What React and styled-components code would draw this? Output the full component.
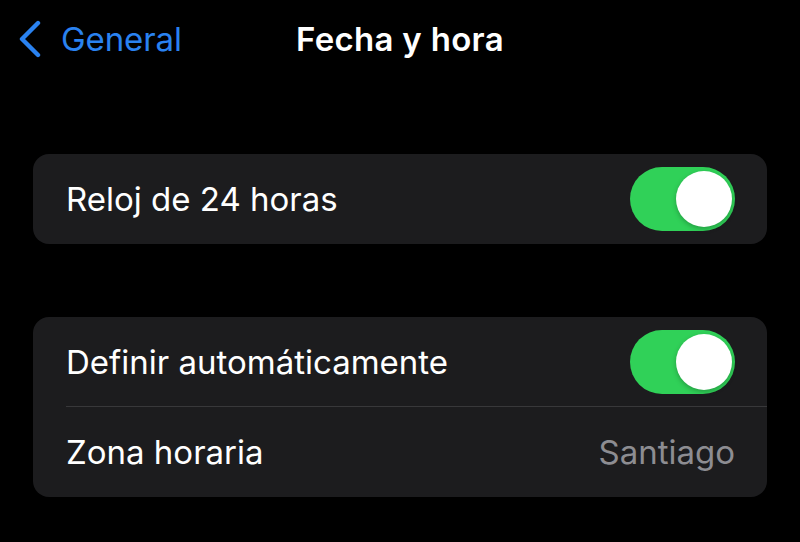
import React, { useState } from 'react'
import styled, { createGlobalStyle } from 'styled-components'

const GlobalStyle = createGlobalStyle`
  html, body {
    margin: 0;
    padding: 0;
    background: #000;
  }
  body {
    font-family: Inter, "Noto Sans", "Liberation Sans", sans-serif;
    color: #fff;
    -webkit-font-smoothing: antialiased;
  }
`

export default function App() {
  const [clock24, setClock24] = useState(true)
  const [autoSet, setAutoSet] = useState(true)

  return (
    <>
      <GlobalStyle />
      <Screen>
        <NavBar>
          <BackButton>
            <svg width="28" height="38" viewBox="0 0 28 38" fill="none">
              <path
                d="M22 3 L6 19 L22 35"
                stroke="currentColor"
                strokeWidth="4.4"
                strokeLinecap="round"
                strokeLinejoin="round"
              />
            </svg>
            <BackLabel>General</BackLabel>
          </BackButton>
          <NavTitle>Fecha y hora</NavTitle>
          <span />
        </NavBar>

        <Content>
          <Group>
            <Row>
              <RowLabel>Reloj de 24 horas</RowLabel>
              <Toggle on={clock24} onClick={() => setClock24(!clock24)}>
                <Knob on={clock24} />
              </Toggle>
            </Row>
          </Group>

          <Group>
            <Row divider>
              <RowLabel>Definir automáticamente</RowLabel>
              <Toggle on={autoSet} onClick={() => setAutoSet(!autoSet)}>
                <Knob on={autoSet} />
              </Toggle>
            </Row>
            <Row>
              <RowLabel>Zona horaria</RowLabel>
              <RowValue>Santiago</RowValue>
            </Row>
          </Group>
        </Content>
      </Screen>
    </>
  )
}

const Screen = styled.div`
  width: 800px;
  height: 542px;
  background: #000;
  overflow: hidden;
`

const NavBar = styled.div`
  display: grid;
  grid-template-columns: 1fr auto 1fr;
  align-items: center;
  height: 78px;
`

const BackButton = styled.div`
  display: flex;
  align-items: center;
  gap: 17px;
  margin-left: 16px;
  color: #2a82f0;
  cursor: pointer;
`

const BackLabel = styled.span`
  font-size: 33px;
  font-weight: 400;
  letter-spacing: -0.1px;
`

const NavTitle = styled.div`
  font-size: 33px;
  font-weight: 600;
  letter-spacing: 0.3px;
  color: #fff;
`

const Content = styled.div`
  display: flex;
  flex-direction: column;
  gap: 73px;
  padding: 76px 33px 0;
`

const Group = styled.div`
  background: #1c1c1e;
  border-radius: 16px;
  overflow: hidden;
`

const Row = styled.div`
  position: relative;
  display: flex;
  align-items: center;
  justify-content: space-between;
  height: 90px;
  padding: 0 32px 0 33px;
  box-sizing: border-box;

  &::after {
    content: '';
    display: ${p => (p.divider ? 'block' : 'none')};
    position: absolute;
    left: 33px;
    right: 0;
    bottom: 0;
    height: 1px;
    background: #38383a;
  }
`

const RowLabel = styled.span`
  font-size: 33px;
  letter-spacing: 0;
  color: #fff;
`

const RowValue = styled.span`
  font-size: 33px;
  letter-spacing: 0;
  color: #8d8d92;
`

const Toggle = styled.div`
  position: relative;
  width: 105px;
  height: 64px;
  border-radius: 32px;
  background: ${p => (p.on ? '#30d158' : '#39393d')};
  cursor: pointer;
  flex-shrink: 0;
`

const Knob = styled.div`
  position: absolute;
  top: 4px;
  left: ${p => (p.on ? '46px' : '4px')};
  width: 56px;
  height: 56px;
  border-radius: 50%;
  background: #fff;
  box-shadow: 0 2px 5px rgba(0, 0, 0, 0.25);
`
